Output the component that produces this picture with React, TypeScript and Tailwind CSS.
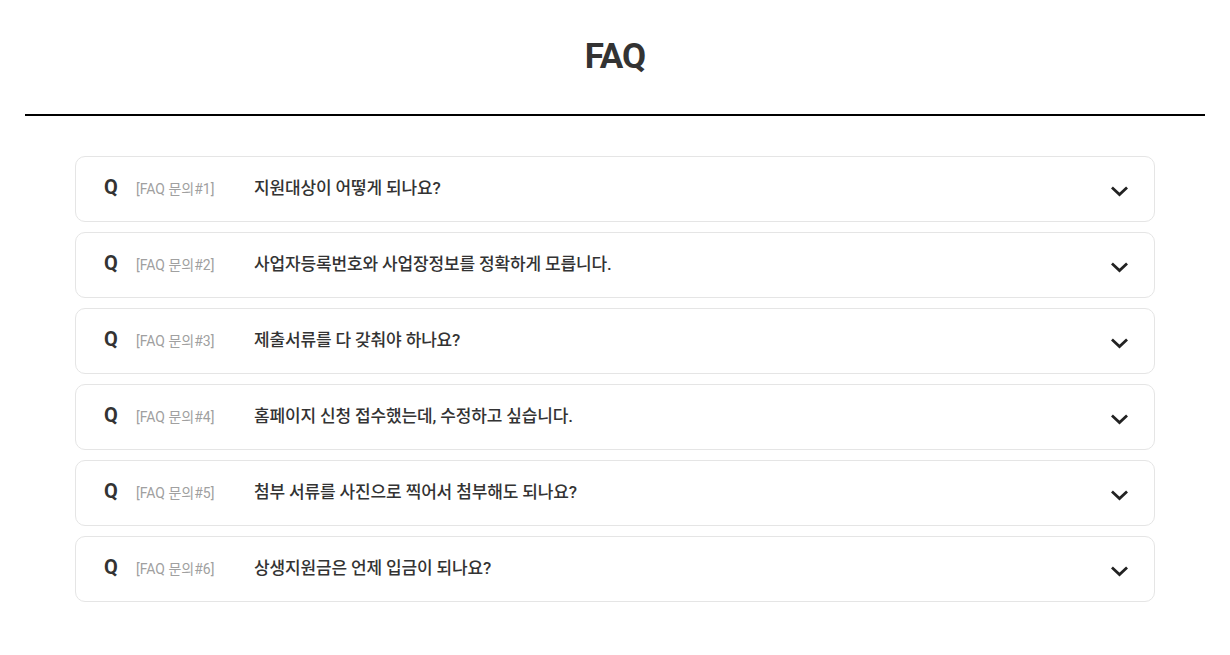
const faqs = [
  '지원대상이 어떻게 되나요?',
  '사업자등록번호와 사업장정보를 정확하게 모릅니다.',
  '제출서류를 다 갖춰야 하나요?',
  '홈페이지 신청 접수했는데, 수정하고 싶습니다.',
  '첨부 서류를 사진으로 찍어서 첨부해도 되나요?',
  '상생지원금은 언제 입금이 되나요?',
];

const Chevron = () => (
  <svg width="17" height="11" viewBox="0 0 17 11" fill="none" className="translate-y-[2px]">
    <path d="M2 2.5l6.5 6 6.5-6" stroke="#222" strokeWidth="2.8" strokeLinecap="square" />
  </svg>
);

export default function App() {
  return (
    <div
      className="min-h-screen bg-white text-[#333]"
      style={{ fontFamily: 'Roboto, "Noto Sans CJK KR", sans-serif' }}
    >
      <div className="px-[25px] pt-[35px]">
        <h1 className="text-center text-[35px] font-bold leading-[44px] tracking-[-1px] text-[#333]">FAQ</h1>
        <div className="mt-[35px] h-[2px] bg-black" />
      </div>
      <ul className="mx-[75px] mt-[40px] flex flex-col gap-[10px]">
        {faqs.map((q, i) => (
          <li
            key={i}
            className="flex h-[66px] items-center rounded-[10px] border border-[#e5e5e5] pl-[28px] pr-[26px]"
          >
            <span className="w-[32px] -translate-y-[2px] text-[20px] font-bold text-[#333]">Q</span>
            <span className="w-[118px] text-[14px] text-[#a0a0a0]">[FAQ 문의#{i + 1}]</span>
            <span className="flex-1 text-[17px] font-medium tracking-[-0.15px] text-[#333]">{q}</span>
            <Chevron />
          </li>
        ))}
      </ul>
    </div>
  );
}
